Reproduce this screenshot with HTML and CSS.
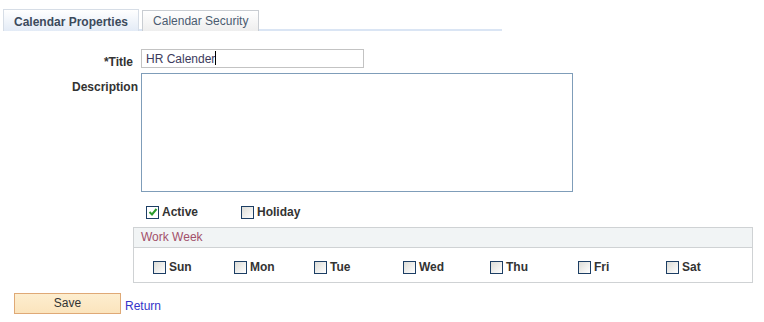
FILE: index.html
```html
<!DOCTYPE HTML>
<html>
<head>
  <meta charset="utf-8">
  <title>Calendar Properties</title>
  <link rel="stylesheet" href="styles.css">
</head>
<body>
<div class="tabs">
  <span class="tab active">Calendar Properties</span>
  <span class="tab">Calendar Security</span>
</div>
<div class="form">
  <div class="row row-title">
    <label class="lbl lbl-title">*Title</label>
    <div class="input">HR Calender<span class="caret"></span></div>
  </div>
  <div class="row row-desc">
    <label class="lbl lbl-desc">Description</label>
    <div class="textarea"></div>
  </div>
  <div class="flags">
    <span class="chk-item chk-active"><span class="cb checked"><svg width="10" height="10" viewBox="0 0 10 10"><path d="M1.5 5 L4 7.5 L8.5 2" fill="none" stroke="#2a9a2a" stroke-width="2"/></svg></span>Active</span>
    <span class="chk-item"><span class="cb"></span>Holiday</span>
  </div>
  <div class="group">
    <div class="group-head">Work Week</div>
    <div class="days">
      <span class="chk-item"><span class="cb"></span>Sun</span>
      <span class="chk-item"><span class="cb"></span>Mon</span>
      <span class="chk-item"><span class="cb"></span>Tue</span>
      <span class="chk-item"><span class="cb"></span>Wed</span>
      <span class="chk-item"><span class="cb"></span>Thu</span>
      <span class="chk-item"><span class="cb"></span>Fri</span>
      <span class="chk-item"><span class="cb"></span>Sat</span>
    </div>
  </div>
</div>
<div class="actions">
  <span class="btn">Save</span>
  <a href="#" class="link">Return</a>
</div>
</body>
</html>
```

FILE: styles.css
```css
/*Style initialization*/
body{
	margin:0;
	padding:0;
	font:12px "Liberation Sans",Arial,sans-serif;
	color:#333;
	background:#fff;
}

/*1.tabs*/
.tabs{
	display:flex;
	gap:3px;
	width:499px;
	margin:9px 0 0 3px;
	border-bottom:2px solid #dae5f4;
	height:20px;
}
.tab{
	box-sizing:border-box;
	height:21px;
	padding:2px 10px 0 10px;
	line-height:16px;
	border:1px solid #c9cdd2;
	border-bottom:none;
	background:linear-gradient(#ffffff,#eeeeee);
	color:#4b5b70;
	font-size:12px;
	margin-top:1px;
	white-space:nowrap;
}
.tab.active{
	height:22px;
	margin-top:0;
	padding:4px 10px 0 10px;
	background:linear-gradient(#ffffff,#e3ebf6);
	color:#3c4a5c;
	font-weight:bold;
	border-color:#d6dde6;
}

/*2.form*/
.form{
	margin-top:18px;
}
.row{
	display:flex;
	align-items:flex-start;
}
.row-title{
	height:19px;
}
.lbl{
	box-sizing:border-box;
	width:141px;
	text-align:right;
	font-weight:bold;
	color:#333;
	line-height:14px;
}
.lbl-title{
	padding:6px 8px 0 0;
}
.lbl-desc{
	padding:7px 3px 0 0;
}
.input{
	box-sizing:border-box;
	width:223px;
	height:19px;
	padding:1px 4px 0 4px;
	border:1px solid #c3c3c3;
	color:#3d3b5c;
	line-height:15px;
	font-size:12px;
}
.caret{
	display:inline-block;
	width:1px;
	height:14px;
	background:#000;
	vertical-align:-2px;
}
.row-desc{
	margin-top:5px;
}
.textarea{
	box-sizing:border-box;
	width:432px;
	height:119px;
	border:1px solid #7f9db9;
}

/*2-1.checkbox*/
.chk-item{
	display:inline-flex;
	align-items:center;
	gap:3px;
	font-weight:bold;
	color:#333;
}
.cb{
	box-sizing:border-box;
	display:inline-flex;
	align-items:center;
	justify-content:center;
	width:13px;
	height:13px;
	border:1px solid #1c3e64;
	background:linear-gradient(135deg,#dcdcd7,#ffffff);
}
.cb.checked{
	background:#fff;
}
.flags{
	display:flex;
	margin:12px 0 0 146px;
	height:16px;
	align-items:center;
}
.chk-active{
	width:95px;
}

/*2-2.group box*/
.group{
	box-sizing:border-box;
	width:620px;
	margin:7px 0 0 133px;
	border:1px solid #cfd2d4;
	height:56px;
}
.group-head{
	height:19px;
	line-height:18px;
	padding-left:7px;
	background:#f1f4f5;
	border-bottom:1px solid #cfd2d4;
	color:#a2506a;
}
.days{
	display:grid;
	grid-template-columns:81px 80px 89px 87px 88px 88px auto;
	padding:12px 0 0 19px;
}

/*3.actions*/
.actions{
	display:flex;
	align-items:flex-end;
	gap:4px;
	margin:10px 0 0 14px;
}
.btn{
	box-sizing:border-box;
	width:107px;
	height:21px;
	border:1px solid #dfa976;
	background:linear-gradient(#fdeecf,#fbe4bd);
	text-align:center;
	line-height:18px;
	color:#333;
}
.link{
	color:#3434c8;
	text-decoration:none;
	line-height:14px;
	margin-bottom:1px;
}
```
